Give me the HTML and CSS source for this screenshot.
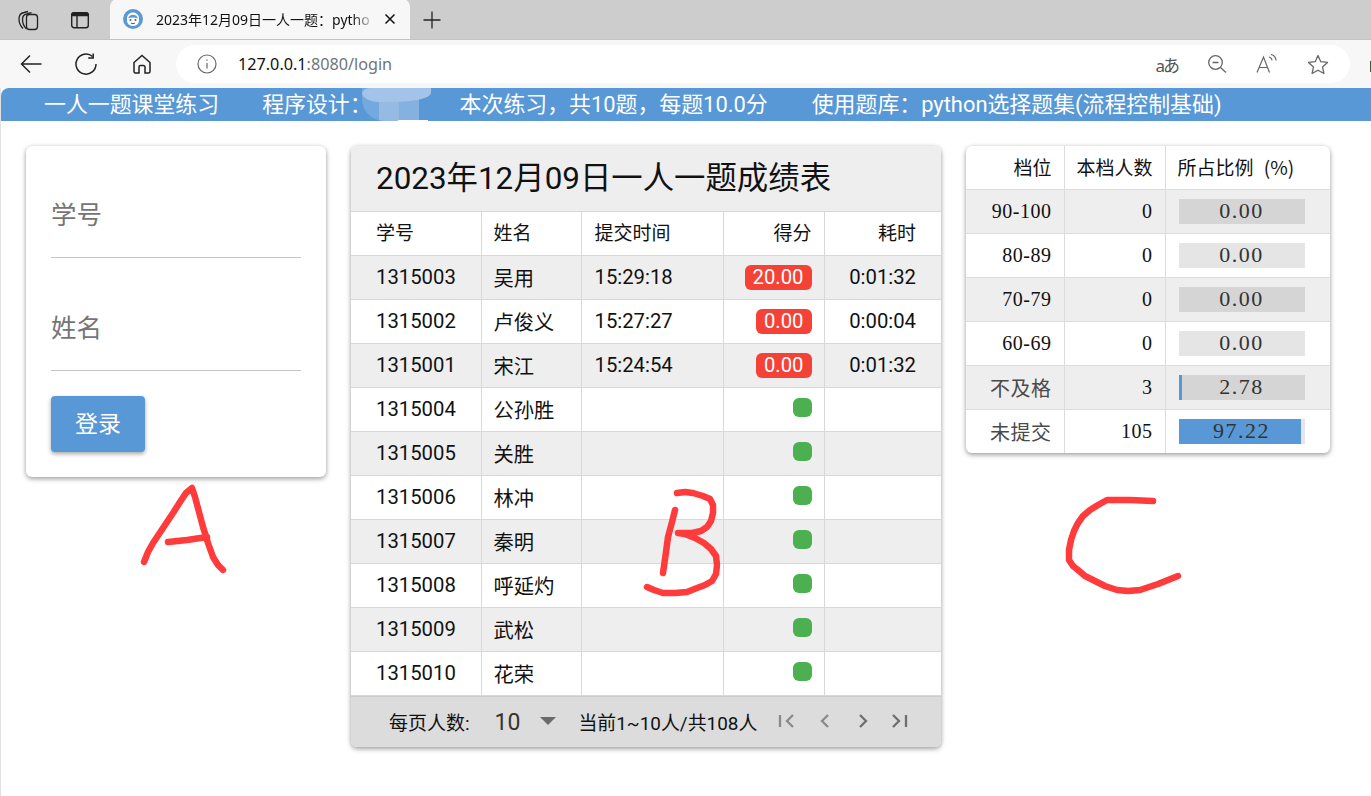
FILE: index.html
```html
<!DOCTYPE html>
<html lang="zh-CN">
<head>
    <meta charset="UTF-8">
    <title>2023年12月09日一人一题</title>
    <link rel="stylesheet" href="styles.css">
</head>
<body>
    <div class="tabstrip">
        <span class="strip-btn">
            <svg width="22" height="22" viewBox="0 0 22 22" fill="none" stroke="#222" stroke-width="1.300">
                <path d="M6 19.500C3.500 17 2 14 2 10c0-3.500 2-6 5-6.500l4-1"/>
                <path d="M9.500 20C7 17.500 5.500 14 5.500 10.500c0-3 1.500-5 4-5.500l5-1.300"/>
                <rect x="9.500" y="5.500" width="11" height="15" rx="3"/>
            </svg>
        </span>
        <span class="strip-btn">
            <svg width="20" height="20" viewBox="0 0 20 20" fill="none" stroke="#222" stroke-width="1.400">
                <rect x="1.700" y="2.700" width="16.600" height="15" rx="2.500"/>
                <path d="M1.700 5.500c0-2 1-2.800 2.500-2.800h11.600c1.500 0 2.500.8 2.500 2.800z" fill="#222"/>
                <path d="M7 5.500v12"/>
            </svg>
        </span>
        <div class="tab">
            <svg class="favicon" width="20" height="20" viewBox="0 0 20 20">
                <circle cx="10" cy="10" r="10" fill="#5a99d6"/>
                <path d="M4 9.500c0-3.500 2.500-6 6-6s6 2.500 6 6v2c0 3-2.500 5.500-6 5.500s-6-2.500-6-5.500z" fill="#fff"/>
                <path d="M5 9.500c1-3 3-3.800 5-3.800s4 .8 5 3.800c-3-1.300-7-1.300-10 0z" fill="#5a99d6"/>
                <circle cx="7.500" cy="11" r="1" fill="#33618f"/>
                <circle cx="12.500" cy="11" r="1" fill="#33618f"/>
                <path d="M8 14c1.200.8 2.800.8 4 0" fill="none" stroke="#33618f"/>
            </svg>
            <span class="tab-title">2023年12月09日一人一题：pytho</span>
            <svg class="tab-close" width="12" height="12" viewBox="0 0 12 12" stroke="#111" stroke-width="1.500">
                <path d="M1.500 1.500l9 9M10.500 1.500l-9 9"/>
            </svg>
        </div>
        <svg class="new-tab" width="20" height="20" viewBox="0 0 20 20" stroke="#222" stroke-width="1.300">
            <path d="M10 1.500v17M1.500 10h17"/>
        </svg>
    </div>

    <div class="toolbar">
        <span class="nav-btn">
            <svg width="24" height="24" viewBox="0 0 24 24" fill="none" stroke="#222" stroke-width="1.500">
                <path d="M22.500 12H2.500M11 3.500L2.500 12l8.500 8.500"/>
            </svg>
        </span>
        <span class="nav-btn">
            <svg width="24" height="24" viewBox="0 0 24 24" fill="none" stroke="#222" stroke-width="1.500">
                <path d="M18.500 4.500A10 10 0 1 0 22 12"/>
                <path d="M19.200 1.500v4.500h-5"/>
            </svg>
        </span>
        <span class="nav-btn">
            <svg width="22" height="22" viewBox="0 0 22 22" fill="none" stroke="#222" stroke-width="1.500">
                <path d="M3 9.500L11 2.500l8 7v9a1.500 1.500 0 0 1-1.500 1.500H14v-6a1.500 1.500 0 0 0-1.500-1.500h-3A1.500 1.500 0 0 0 8 14v6H4.500A1.500 1.500 0 0 1 3 18.500z"/>
            </svg>
        </span>
        <div class="addressbar">
            <svg class="info" width="20" height="20" viewBox="0 0 20 20" fill="none" stroke="#666" stroke-width="1.200">
                <circle cx="10" cy="10" r="9"/>
                <path d="M10 9v5.500M10 5.500v1.300"/>
            </svg>
            <span class="url"><span class="url-host">127.0.0.1</span>:8080/login</span>
            <span class="addr-actions">
                <span class="translate">aあ</span>
                <svg width="20" height="20" viewBox="0 0 20 20" fill="none" stroke="#666" stroke-width="1.300">
                    <circle cx="8.500" cy="8.500" r="6.800"/>
                    <path d="M5.500 8.500h6M13.500 13.500l5.500 5"/>
                </svg>
                <svg width="22" height="20" viewBox="0 0 22 20" fill="none" stroke="#666" stroke-width="1.200">
                    <path d="M1 18.500L7.500 3l6 15.500M3.200 13.500h8.500M13 3c2 .5 3 2 3 3.500M15 .5c3 .8 5 3 5 6"/>
                </svg>
                <svg width="22" height="21" viewBox="0 0 22 21" fill="none" stroke="#666" stroke-width="1.300">
                    <path d="M11 1.500l2.800 6.200 6.700.7-5 4.500 1.400 6.600L11 16.200l-5.900 3.300 1.400-6.600-5-4.500 6.700-.7z" stroke-linejoin="round"/>
                </svg>
            </span>
        </div>
        <span class="edge-mark"></span>
    </div>

    <div class="page">
        <header class="banner">
            <span>一人一题课堂练习</span>
            <span class="teacher">程序设计：<span class="teacher-name"></span><i class="smudge"></i></span>
            <span>本次练习，共10题，每题10.0分</span>
            <span class="bank">使用题库：python选择题集(流程控制基础)</span>
        </header>

        <main class="content">
            <form class="card login">
                <div class="field">学号</div>
                <div class="field">姓名</div>
                <button type="button" class="btn-login">登录</button>
            </form>

            <section class="card scores">
                <h1 class="scores-title">2023年12月09日一人一题成绩表</h1>
                <table class="score-table">
                    <colgroup>
                        <col class="col-id"><col class="col-name"><col class="col-time"><col class="col-score"><col class="col-used">
                    </colgroup>
                    <thead>
                        <tr><th>学号</th><th>姓名</th><th>提交时间</th><th class="num">得分</th><th class="num">耗时</th></tr>
                    </thead>
                    <tbody>
                        <tr><td>1315003</td><td>吴用</td><td>15:29:18</td><td class="num"><span class="badge red">20.00</span></td><td class="num">0:01:32</td></tr>
                        <tr><td>1315002</td><td>卢俊义</td><td>15:27:27</td><td class="num"><span class="badge red">0.00</span></td><td class="num">0:00:04</td></tr>
                        <tr><td>1315001</td><td>宋江</td><td>15:24:54</td><td class="num"><span class="badge red">0.00</span></td><td class="num">0:01:32</td></tr>
                        <tr><td>1315004</td><td>公孙胜</td><td></td><td class="num"><span class="badge green"></span></td><td></td></tr>
                        <tr><td>1315005</td><td>关胜</td><td></td><td class="num"><span class="badge green"></span></td><td></td></tr>
                        <tr><td>1315006</td><td>林冲</td><td></td><td class="num"><span class="badge green"></span></td><td></td></tr>
                        <tr><td>1315007</td><td>秦明</td><td></td><td class="num"><span class="badge green"></span></td><td></td></tr>
                        <tr><td>1315008</td><td>呼延灼</td><td></td><td class="num"><span class="badge green"></span></td><td></td></tr>
                        <tr><td>1315009</td><td>武松</td><td></td><td class="num"><span class="badge green"></span></td><td></td></tr>
                        <tr><td>1315010</td><td>花荣</td><td></td><td class="num"><span class="badge green"></span></td><td></td></tr>
                    </tbody>
                </table>
                <footer class="pager">
                    <span class="pager-label">每页人数:</span>
                    <span class="pager-size">10</span>
                    <span class="pager-caret"></span>
                    <span class="pager-range">当前1~10人/共108人</span>
                    <span class="pager-btns">
                        <svg width="18" height="16" viewBox="0 0 18 16" fill="none" stroke="#8a8a8a" stroke-width="2.300"><path d="M2 2v12M15 2L9 8l6 6"/></svg>
                        <svg width="18" height="16" viewBox="0 0 18 16" fill="none" stroke="#8a8a8a" stroke-width="2.300"><path d="M12 2L6 8l6 6"/></svg>
                        <svg width="18" height="16" viewBox="0 0 18 16" fill="none" stroke="#6f6f6f" stroke-width="2.300"><path d="M6 2l6 6-6 6"/></svg>
                        <svg width="18" height="16" viewBox="0 0 18 16" fill="none" stroke="#6f6f6f" stroke-width="2.300"><path d="M1 2l6 6-6 6M14 2v12"/></svg>
                    </span>
                </footer>
            </section>

            <section class="card levels">
                <table class="level-table">
                    <colgroup>
                        <col class="col-level"><col class="col-count"><col class="col-ratio">
                    </colgroup>
                    <thead>
                        <tr><th class="num">档位</th><th class="num">本档人数</th><th class="ratio-head">所占比例 (%)</th></tr>
                    </thead>
                    <tbody>
                        <tr><td class="num">90-100</td><td class="num">0</td><td><div class="bar"><span class="bar-text">0.00</span></div></td></tr>
                        <tr><td class="num">80-89</td><td class="num">0</td><td><div class="bar"><span class="bar-text">0.00</span></div></td></tr>
                        <tr><td class="num">70-79</td><td class="num">0</td><td><div class="bar"><span class="bar-text">0.00</span></div></td></tr>
                        <tr><td class="num">60-69</td><td class="num">0</td><td><div class="bar"><span class="bar-text">0.00</span></div></td></tr>
                        <tr><td class="num level-word">不及格</td><td class="num">3</td><td><div class="bar"><i class="bar-fill" style="width: 2.78%"></i><span class="bar-text">2.78</span></div></td></tr>
                        <tr><td class="num level-word">未提交</td><td class="num">105</td><td><div class="bar"><i class="bar-fill" style="width: 97.22%"></i><span class="bar-text">97.22</span></div></td></tr>
                    </tbody>
                </table>
            </section>
        </main>
    </div>

    <!-- freehand ink strokes on top of the screenshot -->
    <svg class="ink" width="1371" height="796" viewBox="0 0 1371 796" fill="none" stroke="#ff3b3b" stroke-width="6.500" stroke-linecap="round" stroke-linejoin="round">
        <polyline points="144,562 148,552 153,543 163,528 173,513 180,502 186,493 192,488 195,497 199,512 203,527 208,543 213,557 218,565 223,570"/>
        <polyline points="168,542 187,540 207,537"/>
        <polyline points="677,493 685,492 693,493 703,496 710,499 713,505 713,513 711,521 707,527 701,531 692,533 678,533 685,534 695,538 704,543 711,549 716,556 717,565 716,574 712,581 705,585 697,588 687,592 675,593 663,593 654,590 647,587"/>
        <polyline points="675,510 672,522 668,537 666,552 663,573"/>
        <polyline points="1153,501 1130,500 1107,500 1098,505 1090,510 1083,516 1078,523 1074,531 1071,540 1069,550 1069,560 1073,566 1078,570 1085,576 1093,580 1105,586 1117,590 1128,591 1140,590 1158,584 1178,576"/>
    </svg>
</body>
</html>
```

FILE: styles.css
```css
* { box-sizing: border-box; }
html, body { margin: 0; height: 100%; }
body {
    position: relative;
    overflow: hidden;
    background: #fff;
    color: #111;
    font-family: Roboto, "Noto Sans CJK SC", sans-serif;
}

/* browser chrome */
.tabstrip { display: flex; align-items: flex-end; height: 40px; padding-left: 2px; background: #cdcdcd; border-bottom: 1px solid #c4c4c4; }
.strip-btn { display: flex; align-items: center; justify-content: center; width: 52px; height: 39px; }
.tab { display: flex; align-items: center; width: 300px; height: 40px; margin-left: 4px; padding: 0 14px 0 13px; background: #f7f7f7; border-radius: 8px 8px 0 0; }
.favicon { flex: none; }
.tab-title {
    flex: none;
    width: 220px;
    margin: 0 auto 0 13px;
    white-space: nowrap;
    font-family: "Noto Sans", "Noto Sans CJK SC", sans-serif;
    font-size: 14px;
    color: #111;
    -webkit-mask-image: linear-gradient(to left, transparent, #000 24px);
    mask-image: linear-gradient(to left, transparent, #000 24px);
}
.tab-close { flex: none; }
.new-tab { margin: 0 0 9px 12px; }

.toolbar { display: flex; align-items: center; position: relative; height: 48px; padding: 0 21px 0 3px; background: #f7f7f7; }
.nav-btn { display: flex; align-items: center; justify-content: center; width: 55.500px; height: 36px; }
.addressbar { display: flex; align-items: center; flex: 1; height: 38px; margin-left: 6.500px; padding: 0 21px; background: #fff; border-radius: 19px; }
.url { margin-left: 21px; font-family: "Noto Sans", sans-serif; font-size: 16.200px; color: #70757a; }
.url-host { color: #111; }
.addr-actions { display: flex; align-items: center; gap: 29px; margin-left: auto; }
.translate { font-family: "Noto Sans", "Noto Sans CJK JP", sans-serif; font-size: 17px; letter-spacing: -2px; color: #555; }
.edge-mark { position: absolute; right: 0; top: 21px; width: 1px; height: 11px; background: #1e6b3a; }

/* page */
.page { height: 708px; border-left: 1px solid #e2e2e2; }
.banner { display: flex; gap: 43px; height: 33px; padding-left: 43px; background: #5898d6; color: #fff; font-size: 21.900px; line-height: 34px; border-radius: 8px 0 0 0; white-space: nowrap; }
.teacher { position: relative; }
.teacher-name { display: inline-block; width: 45px; }
.bank { margin-left: 1px; }
.smudge {
    position: absolute;
    left: 100px;
    top: 0;
    width: 57px;
    height: 33px;
    border-radius: 0 0 0 22px;
    background: linear-gradient(90deg, #74a9dd 0 17px, #95bae4 17px 37px, #85b1e0 37px);
}
.smudge::before { content: ""; position: absolute; left: 0; top: 0; width: 69px; height: 14px; border-radius: 14px 0 60px 30px / 8px 0 14px 14px; background: #a3c3e8; }
.smudge::after { content: ""; position: absolute; left: 36px; bottom: 0; width: 30px; height: 1px; background: #fff; }

.content { display: flex; align-items: flex-start; gap: 25px; padding: 25px 0 0 25px; }
.card { background: #fff; border-radius: 6px; box-shadow: 0 2px 5px rgba(0, 0, 0, .35), 0 0 4px rgba(0, 0, 0, .08); overflow: hidden; }

/* A */
.login { width: 300px; height: 331px; padding: 25px; }
.field { height: 87px; padding-top: 28px; font-size: 25.500px; line-height: 32px; color: #757575; border-bottom: 1px solid #c4c4c4; }
.field + .field { height: 113px; padding-top: 54px; }
.btn-login { display: block; width: 94px; height: 56px; margin-top: 25px; padding: 0 0 5px; border: 0; border-radius: 4px; background: #5898d6; color: #fff; font: inherit; font-size: 23px; box-shadow: 0 2px 4px rgba(0, 0, 0, .35); }

/* B */
.scores { width: 590px; height: 601px; }
.scores-title { height: 65px; margin: 0; padding-left: 25px; background: #eee; font-size: 31.400px; font-weight: 400; line-height: 65px; color: #111; white-space: nowrap; }
.score-table { width: 590px; table-layout: fixed; border-collapse: collapse; font-size: 20.300px; }
.col-id { width: 130px; }
.col-name { width: 100px; }
.col-time { width: 142px; }
.col-score { width: 101px; }
.col-used { width: 117px; }
.score-table th, .score-table td { height: 44px; padding: 0 12px 2px; border: 1px solid #d8d8d8; text-align: left; font-weight: 400; white-space: nowrap; }
.score-table th { padding-bottom: 4px; font-size: 19px; }
.score-table tr > :nth-child(3) { padding-left: 13px; }
.score-table tr > :first-child { padding-left: 25px; border-left: 0; }
.score-table tr > :last-child { padding-right: 25px; border-right: 0; }
.score-table tbody tr:nth-child(odd) { background: #eee; }
.score-table .num { text-align: right; }
.badge { display: inline-block; height: 25px; padding: 0 8px; border-radius: 6px; color: #fff; line-height: 25px; vertical-align: middle; }
.badge.red { margin-top: 2px; background: #f44336; }
.badge.green { width: 19px; height: 19px; padding: 0; background: #4caf50; margin-bottom: 4px; }

.pager { display: flex; align-items: center; height: 51px; padding: 0 0 2px 38px; background: #dcdcdc; font-size: 19px; border-top: 1px solid #ccc; }
.pager-size { margin: 2px 0 0 25px; font-size: 23px; color: #333; }
.pager-caret { width: 0; height: 0; margin-left: 20px; border: 8px solid transparent; border-top: 8px solid #6b6b6b; border-bottom: 0; }
.pager-range { margin-left: 22px; font-size: 18.900px; }
.pager-btns { display: flex; gap: 20px; margin-left: 21px; }

/* C */
.levels { width: 364px; height: 307px; }
.level-table { width: 364px; table-layout: fixed; border-collapse: collapse; font-family: "Liberation Serif", "Noto Sans CJK SC", serif; font-size: 20px; letter-spacing: .5px; }
.col-level { width: 98px; }
.col-count { width: 101px; }
.col-ratio { width: 165px; }
.level-table th, .level-table td { height: 44px; padding: 0 12px; border: 1px solid #dcdcdc; font-weight: 400; text-align: left; white-space: nowrap; }
.level-table th { height: 43px; padding-bottom: 2px; font-family: "Noto Sans CJK SC", sans-serif; font-size: 19px; letter-spacing: 0; }
.level-table .ratio-head { word-spacing: 6px; }
.level-table tr > :first-child { border-left: 0; }
.level-table tr > :last-child { border-right: 0; }
.level-table thead tr > * { border-top: 0; }
.level-table tbody tr:last-child td { border-bottom: 0; }
.level-table tbody tr:nth-child(odd) { background: #eee; }
.level-table .num { text-align: right; }
.level-table .level-word { color: #4a4a4a; }
.level-table td:last-child { padding: 0 25px 0 13px; }
.bar { position: relative; display: flex; align-items: center; justify-content: center; width: 126px; height: 25px; background: rgba(0, 0, 0, .1); }
.bar-fill { position: absolute; left: 0; top: 0; bottom: 0; background: #5898d6; }
.bar-text { position: relative; font-size: 22px; letter-spacing: 1.500px; color: #333; }

.ink { position: absolute; left: 0; top: 0; pointer-events: none; }
```
